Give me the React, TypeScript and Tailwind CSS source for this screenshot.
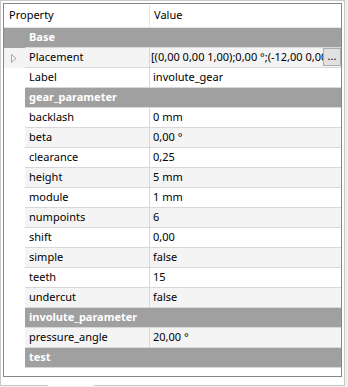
import React from "react";

type Row =
  | { kind: "cat"; name: string; full?: boolean }
  | { kind: "prop"; name: string; value: string; expander?: boolean; button?: boolean };

const rows: Row[] = [
  { kind: "cat", name: "Base", full: true },
  { kind: "prop", name: "Placement", value: "[(0,00 0,00 1,00);0,00 °;(-12,00 0,00 0,00)]", expander: true, button: true },
  { kind: "prop", name: "Label", value: "involute_gear" },
  { kind: "cat", name: "gear_parameter" },
  { kind: "prop", name: "backlash", value: "0 mm" },
  { kind: "prop", name: "beta", value: "0,00 °" },
  { kind: "prop", name: "clearance", value: "0,25" },
  { kind: "prop", name: "height", value: "5 mm" },
  { kind: "prop", name: "module", value: "1 mm" },
  { kind: "prop", name: "numpoints", value: "6" },
  { kind: "prop", name: "shift", value: "0,00" },
  { kind: "prop", name: "simple", value: "false" },
  { kind: "prop", name: "teeth", value: "15" },
  { kind: "prop", name: "undercut", value: "false" },
  { kind: "cat", name: "involute_parameter" },
  { kind: "prop", name: "pressure_angle", value: "20,00 °" },
  { kind: "cat", name: "test" },
];

export default function App() {
  return (
    <div
      className="w-[348px] h-[387px] bg-[#f0f0f0] text-[11px] text-black overflow-hidden"
      style={{ fontFamily: '"Noto Sans", "Open Sans", sans-serif' }}
    >
      <div className="w-[345px] h-[386px] border border-[#c9c9c9] bg-white pt-[2px] px-[2px] pb-[8px] relative">
        <div className="h-full border border-[#828790] bg-white flex flex-col">
          {/* header */}
          <div className="h-[24px] grid grid-cols-[146px_1fr] border-b border-[#e5e5e5] shrink-0">
            <div className="flex items-center pl-[5px] relative">
              Property
              <div className="absolute right-0 top-[1px] bottom-[1px] w-[1px] bg-[#e5e5e5]" />
            </div>
            <div className="pl-[4px] flex items-center">Value</div>
          </div>
          {rows.map((r, i) => {
            if (r.kind === "cat") {
              return (
                <div key={i} className="h-[20px] grid grid-cols-[21px_1fr] shrink-0">
                  <div className={r.full ? "bg-[#a0a0a0]" : "bg-white"} />
                  <div className="bg-[#a0a0a0] border-b border-[#d8d8d8] pl-[4px] flex items-center font-bold text-white">
                    {r.name}
                  </div>
                </div>
              );
            }
            const alt = i % 2 === 1;
            const bg = alt ? "bg-[#f4f4f4]" : "bg-white";
            return (
              <div key={i} className="h-[20px] grid grid-cols-[21px_125px_minmax(0,1fr)] shrink-0">
                <div className={`flex items-center justify-center ${r.expander ? bg : "bg-white"}`}>
                  {r.expander && (
                    <svg width="6" height="9" viewBox="0 0 6 9" className="ml-[-2px]">
                      <path d="M0.5 0.5 L5 4.5 L0.5 8.5 Z" fill="none" stroke="#a6a6a6" strokeWidth="1" />
                    </svg>
                  )}
                </div>
                <div className={`${bg} border-b border-r border-[#d8d8d8] pl-[4px] flex items-center`}>
                  {r.name}
                </div>
                <div className={`${bg} border-b border-[#d8d8d8] flex items-center min-w-0`}>
                  {r.button ? (
                    <div className="flex items-center w-full h-full min-w-0">
                      <div className="flex-1 min-w-0 overflow-hidden whitespace-nowrap pl-[1px]">{r.value}</div>
                      <div className="w-[18px] h-[18px] border border-[#adadad] bg-[#e1e1e1] flex items-center justify-center text-[11px] leading-none pb-[3px] shrink-0 mb-[1px]">
                        ...
                      </div>
                    </div>
                  ) : (
                    <div className="pl-[3px] whitespace-nowrap overflow-hidden">{r.value}</div>
                  )}
                </div>
              </div>
            );
          })}
          <div className="flex-1" />
        </div>
        {/* tab gap at bottom */}
        <div className="absolute left-[47px] bottom-[-1px] w-[46px] h-[1px] bg-white" />
      </div>
    </div>
  );
}
